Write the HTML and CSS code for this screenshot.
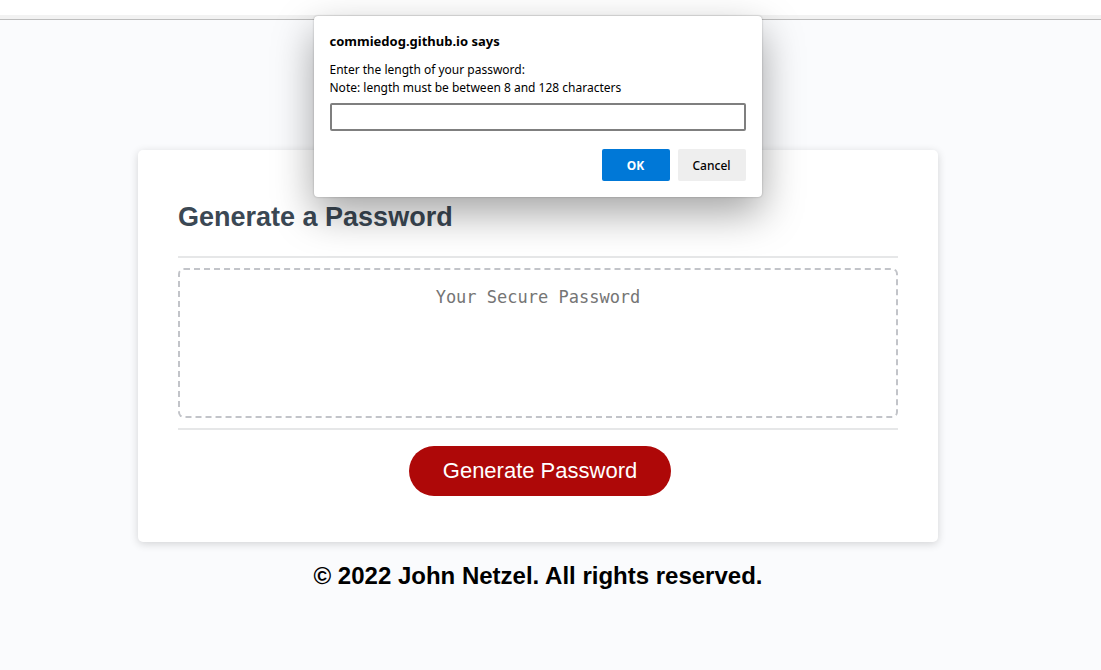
FILE: index.html
```html
<!DOCTYPE html>
<html lang="en">
<head>
<meta charset="utf-8">
<meta name="viewport" content="width=device-width, initial-scale=1">
<title>Password Generator</title>
<link rel="stylesheet" href="styles.css">
</head>
<body>
<div class="topbar"></div>
<main class="page">
  <section class="card">
    <div class="card-header"><h2>Generate a Password</h2></div>
    <div class="card-body">
      <textarea class="password" readonly placeholder="Your Secure Password" aria-label="Generated password"></textarea>
    </div>
    <div class="card-footer"><button class="generate" type="button">Generate Password</button></div>
  </section>
  <footer class="copyright">© 2022 John Netzel. All rights reserved.</footer>
</main>
<form class="prompt" role="dialog" aria-labelledby="prompt-title">
  <h1 class="prompt-title" id="prompt-title">commiedog.github.io says</h1>
  <label class="prompt-message" for="length">Enter the length of your password:<br>Note: length must be between 8 and 128 characters</label>
  <input class="prompt-input" id="length" type="text">
  <div class="prompt-actions">
    <button class="ok" type="button">OK</button>
    <button class="cancel" type="button">Cancel</button>
  </div>
</form>
</body>
</html>
```
FILE: styles.css
```css
* { box-sizing: border-box; }
body {
  margin: 0;
  min-height: 100vh;
  background: #fafbfd;
  font-family: Arial, "Liberation Sans", sans-serif;
}
h1, h2 { margin: 0; }
.topbar {
  height: 20px;
  background: linear-gradient(#fff 15px, #f2f2f2 15px);
  border-bottom: 1px solid #bdbdbd;
}
.page {
  padding: 130px 25px 24px 0;
}
.card {
  width: calc(100% - 64px);
  max-width: 800px;
  margin: 0 auto;
  padding: 40px;
  background: #fff;
  border-radius: 5px;
  box-shadow: 0 2px 8px rgba(0, 0, 0, 0.16);
}
.card-header {
  padding: 8px 0 20px;
  border-bottom: 2px solid #e6e7e8;
}
.card-header h2 {
  padding: 2px 0;
  color: #3b4854;
  font-size: 27px;
  line-height: 34px;
}
.card-body {
  display: flex;
  padding: 10px 0;
}
.password {
  width: 100%;
  height: 150px;
  padding: 16px;
  border: 2px dashed #c2c4c9;
  border-radius: 6px;
  background: transparent;
  font-family: Consolas, "DejaVu Sans Mono", monospace;
  font-size: 17px;
  line-height: 22px;
  text-align: center;
  resize: none;
}
.password::placeholder { color: #757575; }
.card-footer {
  padding: 16px 0 6px 4px;
  border-top: 2px solid #e6e7e8;
  text-align: center;
}
.generate {
  display: block;
  margin: 0 auto;
  height: 50px;
  padding: 0 34px;
  border: 0;
  border-radius: 25px;
  background: #ae0808;
  color: #fff;
  font-family: inherit;
  font-size: 22px;
}
.copyright {
  padding-top: 20px;
  color: #000;
  font-size: 24px;
  font-weight: bold;
  line-height: 28px;
  text-align: center;
}
.prompt {
  position: absolute;
  top: 16px;
  left: calc(50% - 237px);
  width: 448px;
  padding: 16px;
  border-radius: 4px;
  background: #fff;
  box-shadow: 0 0 2px rgba(0, 0, 0, 0.3), 0 16px 40px rgba(0, 0, 0, 0.36);
  color: #000;
  font-family: "Segoe UI", "Noto Sans", sans-serif;
  font-size: 12px;
}
.prompt-title {
  margin-bottom: 11px;
  font-size: 13px;
  line-height: 18px;
}
.prompt-message {
  display: block;
  margin-bottom: 6px;
  line-height: 18px;
}
.prompt-input {
  display: block;
  width: 100%;
  height: 28px;
  padding: 0 8px;
  border: 2px solid #7f7f7f;
  border-radius: 2px;
  background: #fff;
  font: inherit;
}
.prompt-actions {
  display: flex;
  justify-content: flex-end;
  gap: 8px;
  margin-top: 18px;
}
.prompt-actions button {
  width: 68px;
  height: 32px;
  padding: 0;
  border: 0;
  border-radius: 2px;
  font-family: inherit;
  font-size: 12px;
  font-weight: 500;
}
.prompt-actions .ok {
  background: #0078d7;
  color: #fff;
  font-weight: 700;
}
.prompt-actions .cancel {
  background: #eee;
  color: #000;
}
```
